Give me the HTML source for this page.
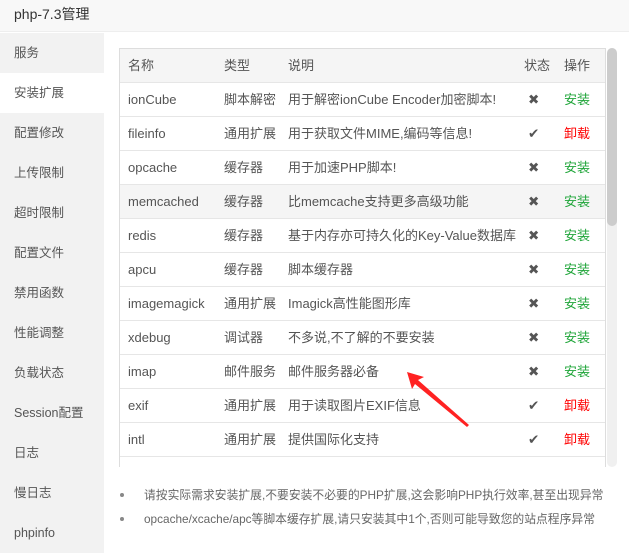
<!DOCTYPE html>
<html><head><style>
body{margin:0;width:629px;height:553px;overflow:hidden;background:#fff;font-family:"Liberation Sans","Noto Sans CJK SC",sans-serif;font-size:12px;color:#555;position:relative}
.title{position:absolute;left:0;top:0;width:629px;height:32px;background:#f8f8f8;border-bottom:1px solid #eee;font-size:14px;color:#333;line-height:28px;padding-left:14px;box-sizing:border-box}
.side{position:absolute;left:0;top:33px;width:104px;height:520px;background:#f2f2f2}
.side div{height:40px;line-height:40px;padding-left:14px;color:#555;font-size:12.5px}
.side .on{background:#fff}
.tbl{position:absolute;left:119px;top:48px;width:487px;height:419px;overflow:hidden;border:1px solid #ddd;border-bottom:none;box-sizing:border-box}
table{border-collapse:collapse;width:486px;table-layout:fixed;font-size:13px}
td{height:33px;line-height:18px;border-bottom:1px solid #e6e6e6;padding:0;white-space:nowrap;overflow:hidden;vertical-align:middle}
tr.h td{background:#f5f5f5}
tr.hv td{background:#f5f5f5}
.i{color:#555;font-size:13.5px;padding-left:4px}
.g{color:#20a53a}.r{color:#f00}
.sb{position:absolute;left:607px;top:48px;width:10px;height:419px;background:#f0f0f0;border-radius:5px}
.sb div{width:10px;height:178px;background:#ccc;border-radius:5px}
ul{position:absolute;left:104px;top:486px;margin:0;padding:0;list-style:none;font-size:11.8px}
li{height:24px;line-height:18px;padding-left:40px;position:relative;color:#666}
li:before{content:"";position:absolute;left:16px;top:7px;width:4px;height:4px;border-radius:2px;background:#888}
</style></head><body>
<div class="title">php-7.3管理</div>
<div class="side"><div>服务</div><div class="on">安装扩展</div><div>配置修改</div><div>上传限制</div><div>超时限制</div><div>配置文件</div><div>禁用函数</div><div>性能调整</div><div>负载状态</div><div>Session配置</div><div>日志</div><div>慢日志</div><div>phpinfo</div></div>
<div class="tbl"><table>
<colgroup><col style="width:104px"><col style="width:64px"><col style="width:236px"><col style="width:40px"><col></colgroup>
<tr class="h"><td style="padding-left:8px">名称</td><td>类型</td><td>说明</td><td>状态</td><td>操作</td></tr>
<tr><td style="padding-left:8px">ionCube</td><td>脚本解密</td><td>用于解密ionCube Encoder加密脚本!</td><td class="i">✖</td><td class="g">安装</td></tr>
<tr><td style="padding-left:8px">fileinfo</td><td>通用扩展</td><td>用于获取文件MIME,编码等信息!</td><td class="i">✔</td><td class="r">卸载</td></tr>
<tr><td style="padding-left:8px">opcache</td><td>缓存器</td><td>用于加速PHP脚本!</td><td class="i">✖</td><td class="g">安装</td></tr>
<tr class="hv"><td style="padding-left:8px">memcached</td><td>缓存器</td><td>比memcache支持更多高级功能</td><td class="i">✖</td><td class="g">安装</td></tr>
<tr><td style="padding-left:8px">redis</td><td>缓存器</td><td>基于内存亦可持久化的Key-Value数据库</td><td class="i">✖</td><td class="g">安装</td></tr>
<tr><td style="padding-left:8px">apcu</td><td>缓存器</td><td>脚本缓存器</td><td class="i">✖</td><td class="g">安装</td></tr>
<tr><td style="padding-left:8px">imagemagick</td><td>通用扩展</td><td>Imagick高性能图形库</td><td class="i">✖</td><td class="g">安装</td></tr>
<tr><td style="padding-left:8px">xdebug</td><td>调试器</td><td>不多说,不了解的不要安装</td><td class="i">✖</td><td class="g">安装</td></tr>
<tr><td style="padding-left:8px">imap</td><td>邮件服务</td><td>邮件服务器必备</td><td class="i">✖</td><td class="g">安装</td></tr>
<tr><td style="padding-left:8px">exif</td><td>通用扩展</td><td>用于读取图片EXIF信息</td><td class="i">✔</td><td class="r">卸载</td></tr>
<tr><td style="padding-left:8px">intl</td><td>通用扩展</td><td>提供国际化支持</td><td class="i">✔</td><td class="r">卸载</td></tr>
<tr><td></td><td></td><td></td><td></td><td></td></tr>
</table></div>
<div class="sb"><div></div></div>
<svg style="position:absolute;left:0;top:0" width="629" height="553"><path d="M407 372 L424 377 L418 380 L469 425 L467 427 L415 384 L412 389 Z" fill="#f22"/></svg>
<ul><li>请按实际需求安装扩展,不要安装不必要的PHP扩展,这会影响PHP执行效率,甚至出现异常</li><li>opcache/xcache/apc等脚本缓存扩展,请只安装其中1个,否则可能导致您的站点程序异常</li></ul>
</body></html>
